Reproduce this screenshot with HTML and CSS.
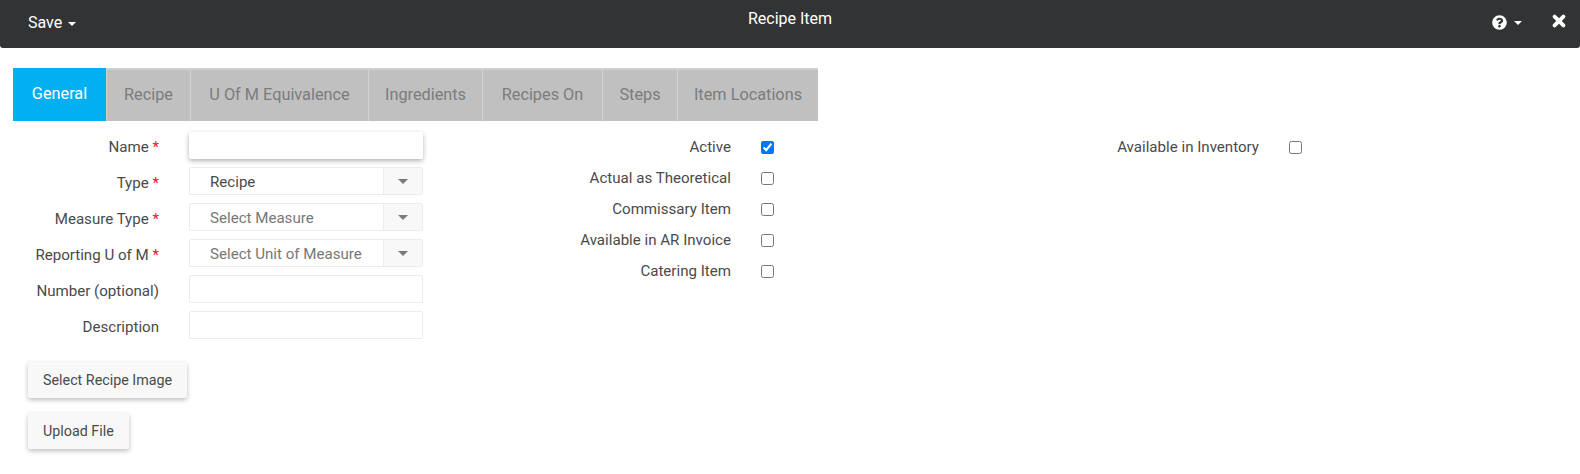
FILE: index.html
```html
<!DOCTYPE html>
<html lang="en">
<head>
<meta charset="utf-8">
<title>Recipe Item</title>
<link rel="stylesheet" href="styles.css">
</head>
<body>
<header class="topbar">
  <div class="save">Save <span class="caret"></span></div>
  <div class="title">Recipe Item</div>
  <div class="actions">
    <span class="help">
      <svg class="help-icon" viewBox="0 0 512 512"><path fill="#fff" d="M504 256c0 137-111 248-248 248S8 393 8 256 119 8 256 8s248 111 248 248zM262.700 90c-54.500 0-89.300 23-116.500 63.800-3.500 5.300-2.300 12.400 2.700 16.300l34.700 26.300c5.200 3.900 12.600 3 16.700-2.100 17.900-22.700 30.100-35.800 57.300-35.800 20.400 0 45.700 13.100 45.700 32.900 0 15-12.400 22.700-32.500 34-23.500 13.200-54.600 29.600-54.600 70.500V300c0 6.600 5.400 12 12 12h56c6.600 0 12-5.400 12-12v-1.300c0-28.400 82.900-29.600 82.900-106.400C379 134.400 318.900 90 262.700 90zM256 338c-25.300 0-45.800 20.500-45.800 45.800 0 25.300 20.500 45.800 45.800 45.800s45.800-20.500 45.800-45.800c0-25.300-20.500-45.800-45.800-45.800z"/></svg>
      <span class="caret"></span>
    </span>
    <svg class="close-icon" viewBox="0 0 14 14"><path d="M2.600 2.600 11.400 11.400M11.400 2.600 2.600 11.400" stroke="#fff" stroke-width="3.800" stroke-linecap="round" fill="none"/></svg>
  </div>
</header>

<nav class="tabs">
  <div class="tab active">General</div>
  <div class="tab">Recipe</div>
  <div class="tab">U Of M Equivalence</div>
  <div class="tab">Ingredients</div>
  <div class="tab">Recipes On</div>
  <div class="tab">Steps</div>
  <div class="tab">Item Locations</div>
</nav>

<main class="form">
  <section class="col-fields">
    <div class="field field-first">
      <label class="label">Name <span class="req">*</span></label>
      <input class="input input-focus" type="text">
    </div>
    <div class="field">
      <label class="label">Type <span class="req">*</span></label>
      <div class="select"><span class="select-value dark">Recipe</span><span class="select-btn"><span class="select-caret"></span></span></div>
    </div>
    <div class="field">
      <label class="label">Measure Type <span class="req">*</span></label>
      <div class="select"><span class="select-value">Select Measure</span><span class="select-btn"><span class="select-caret"></span></span></div>
    </div>
    <div class="field">
      <label class="label">Reporting U of M <span class="req">*</span></label>
      <div class="select"><span class="select-value">Select Unit of Measure</span><span class="select-btn"><span class="select-caret"></span></span></div>
    </div>
    <div class="field">
      <label class="label">Number (optional)</label>
      <input class="input" type="text">
    </div>
    <div class="field">
      <label class="label">Description</label>
      <input class="input" type="text">
    </div>
    <div class="buttons">
      <button class="btn" type="button">Select Recipe Image</button>
      <button class="btn" type="button">Upload File</button>
    </div>
  </section>

  <section class="col-checks">
    <div class="check"><label class="label">Active</label><input type="checkbox" checked></div>
    <div class="check"><label class="label">Actual as Theoretical</label><input type="checkbox"></div>
    <div class="check"><label class="label">Commissary Item</label><input type="checkbox"></div>
    <div class="check"><label class="label">Available in AR Invoice</label><input type="checkbox"></div>
    <div class="check"><label class="label">Catering Item</label><input type="checkbox"></div>
  </section>

  <section class="col-checks col-last">
    <div class="check"><label class="label">Available in Inventory</label><input type="checkbox"></div>
  </section>
</main>
</body>
</html>
```

FILE: styles.css
```css
* { box-sizing: border-box; }

html, body {
  margin: 0;
  padding: 0;
  background: #fff;
  height: 474px;
  overflow: hidden;
}

body {
  font-family: Roboto, "Liberation Sans", sans-serif;
  font-size: 15.100px;
  color: #4a4a4a;
}

.topbar {
  height: 48px;
  background: #323335;
  color: #fff;
  display: grid;
  grid-template-columns: 1fr auto 1fr;
  border-radius: 0 0 3px 3px;
  font-size: 16px;
}

.save {
  padding: 14px 0 0 28px;
  line-height: 18px;
}

.title {
  padding-top: 10px;
  line-height: 18px;
}

.caret {
  display: inline-block;
  width: 0;
  height: 0;
  margin-left: 2px;
  vertical-align: middle;
  border-top: 4px solid #fff;
  border-left: 4px solid transparent;
  border-right: 4px solid transparent;
}

.actions {
  justify-self: end;
  display: flex;
  align-items: flex-start;
  padding: 15px 14px 0 0;
  gap: 30px;
}

.help {
  display: flex;
  align-items: center;
  gap: 5px;
}

.help-icon {
  width: 15px;
  height: 15px;
  display: block;
}

.close-icon {
  width: 14px;
  height: 14px;
  display: block;
  margin-top: -1px;
}

.tabs {
  display: grid;
  grid-template-columns: 93px 84px 178px 114px 120px 75px 141px;
  width: 805px;
  height: 53px;
  margin: 20px 0 0 13px;
  background: #c0c0c0;
  border-top: 2px solid #d0d0d0;
  font-size: 16.300px;
}

.tab {
  line-height: 49px;
  text-align: center;
  color: #7c7c7c;
  border-left: 1px solid #d2d2d2;
  white-space: nowrap;
}

.tab.active {
  margin-top: -2px;
  height: 53px;
  line-height: 51px;
  background: #00b0f0;
  color: #fff;
  border-left: 0;
}

.form {
  display: flex;
  align-items: flex-start;
  padding: 11px 0 0 13px;
}

.col-fields {
  width: 410px;
  display: flex;
  flex-direction: column;
  gap: 8px;
}

.field {
  display: flex;
  align-items: center;
  gap: 30px;
  height: 28px;
}

.field-first {
  height: 27px;
}

.field .label {
  width: 146px;
  flex: none;
  padding-top: 3px;
  text-align: right;
  white-space: nowrap;
}

.req {
  color: #ff0a2c;
}

.input {
  width: 234px;
  height: 28px;
  border: 1px solid #ececec;
  border-radius: 2px;
  background: #fff;
  outline: none;
}

.input-focus {
  height: 27px;
  border-color: #fff;
  box-shadow: 0 2px 5px rgba(0, 0, 0, 0.3);
}

.select {
  width: 234px;
  height: 28px;
  display: flex;
  border: 1px solid #ececec;
  border-radius: 2px;
  line-height: 28px;
}

.select-value {
  flex: 1;
  padding-left: 20px;
  color: #777;
}

.select-value.dark {
  color: #4a4a4a;
}

.select-btn {
  width: 39px;
  background: #f8f8f8;
  border-left: 1px solid #ececec;
  display: flex;
  align-items: center;
  justify-content: center;
}

.select-caret {
  width: 0;
  height: 0;
  border-top: 5px solid #7a7a7a;
  border-left: 5px solid transparent;
  border-right: 5px solid transparent;
}

.buttons {
  display: flex;
  flex-direction: column;
  align-items: flex-start;
  gap: 15px;
  padding: 15px 0 0 15px;
}

.btn {
  height: 36px;
  padding: 0 15px;
  border: 0;
  border-radius: 2px;
  background: #f8f8f8;
  color: #4a4a4a;
  font: inherit;
  font-size: 14.300px;
  box-shadow: 0 2px 5px rgba(0, 0, 0, 0.26);
}

.col-checks {
  width: 351px;
  display: flex;
  flex-direction: column;
  gap: 13px;
  padding-top: 6px;
}

.col-last {
  width: 528px;
}

.check {
  display: flex;
  justify-content: flex-end;
  align-items: center;
  gap: 30px;
  height: 18px;
}

.check input {
  width: 13px;
  height: 13px;
  margin: 0;
  flex: none;
}
```
